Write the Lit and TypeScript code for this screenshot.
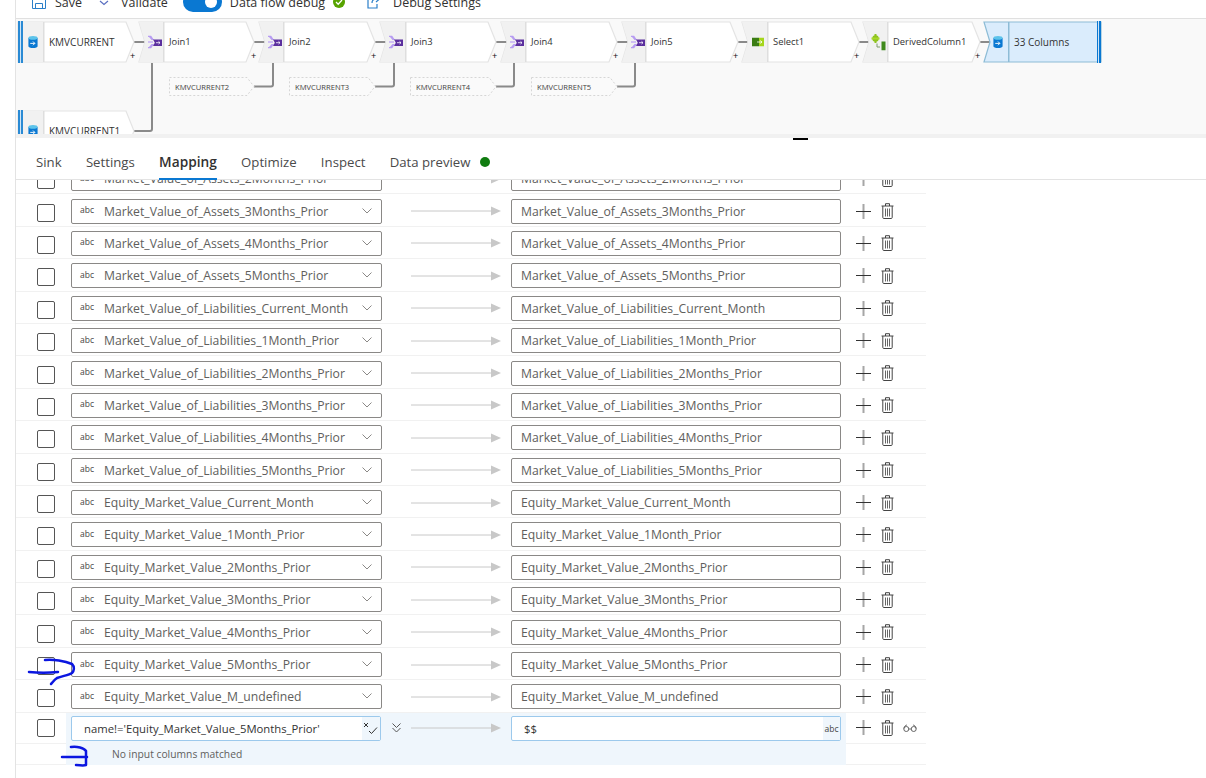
import { LitElement, html, css, svg } from "lit";
import { customElement } from "lit/decorators.js";

type Kind = "source" | "join" | "select" | "derived" | "sink";
interface FlowNode { label: string; kind: Kind; left: number; body: number; tip: number; top: number; plus?: number; }

const NODES: FlowNode[] = [
  { label: "KMVCURRENT", kind: "source", left: 18, body: 44, tip: 134, top: 22, plus: 133 },
  { label: "Join1", kind: "join", left: 139, body: 164, tip: 254, top: 22, plus: 254 },
  { label: "Join2", kind: "join", left: 259, body: 284, tip: 375, top: 22, plus: 374 },
  { label: "Join3", kind: "join", left: 380, body: 406, tip: 496, top: 22, plus: 495 },
  { label: "Join4", kind: "join", left: 501, body: 526, tip: 617, top: 22, plus: 616 },
  { label: "Join5", kind: "join", left: 622, body: 646, tip: 738, top: 22, plus: 736 },
  { label: "Select1", kind: "select", left: 742, body: 768, tip: 859, top: 22, plus: 857 },
  { label: "DerivedColumn1", kind: "derived", left: 863, body: 888, tip: 980, top: 22, plus: 978 },
  { label: "33 Columns", kind: "sink", left: 984, body: 1009, tip: 1101, top: 22 },
  { label: "KMVCURRENT1", kind: "source", left: 18, body: 44, tip: 134, top: 111 },
];

const REFS = [
  { label: "KMVCURRENT2", left: 169, tip: 254, riser: 273 },
  { label: "KMVCURRENT3", left: 289, tip: 375, riser: 394 },
  { label: "KMVCURRENT4", left: 410, tip: 496, riser: 514 },
  { label: "KMVCURRENT5", left: 531, tip: 617, riser: 635 },
];

const LINKS = [
  [134, 146], [254, 266], [375, 386], [496, 507], [617, 628], [738, 749], [859, 870], [980, 991],
];

const COLUMNS = [
  "Market_Value_of_Assets_2Months_Prior",
  "Market_Value_of_Assets_3Months_Prior",
  "Market_Value_of_Assets_4Months_Prior",
  "Market_Value_of_Assets_5Months_Prior",
  "Market_Value_of_Liabilities_Current_Month",
  "Market_Value_of_Liabilities_1Month_Prior",
  "Market_Value_of_Liabilities_2Months_Prior",
  "Market_Value_of_Liabilities_3Months_Prior",
  "Market_Value_of_Liabilities_4Months_Prior",
  "Market_Value_of_Liabilities_5Months_Prior",
  "Equity_Market_Value_Current_Month",
  "Equity_Market_Value_1Month_Prior",
  "Equity_Market_Value_2Months_Prior",
  "Equity_Market_Value_3Months_Prior",
  "Equity_Market_Value_4Months_Prior",
  "Equity_Market_Value_5Months_Prior",
  "Equity_Market_Value_M_undefined",
];

const TABS = ["Sink", "Settings", "Mapping", "Optimize", "Inspect", "Data preview"];

function nodeIcon(kind: Kind) {
  if (kind === "source" || kind === "sink") {
    return svg`<svg class="nicon" width="11" height="14" viewBox="0 0 12 14">
      <path d="M1 2.500v9c0 1.200 2.200 2 5 2s5-.8 5-2v-9z" fill="#0a78d2"/>
      <ellipse cx="6" cy="2.500" rx="5" ry="2" fill="#5cc3ea"/>
      <path d="M3 8.500h5M6 6.500l2 2-2 2" fill="none" stroke="#fff" stroke-width="1"/>
    </svg>`;
  }
  if (kind === "join") {
    return svg`<svg class="nicon" width="14" height="13" viewBox="0 0 14 13">
      <path d="M0 0h3l3 4.500H3.500L1 1.500H0zM0 13h3l3-4.500H3.500L1 11.500H0z" fill="#b79cf2"/>
      <path d="M0 5.800h5v1.400H0z" fill="#c4aef5"/>
      <path d="M5 4h9v6.500H5l1.800-3.200z" fill="#5b2f9e"/>
      <path d="M8 7.200h4M10.500 5.800l1.500 1.400-1.500 1.400" fill="none" stroke="#fff" stroke-width=".8"/>
    </svg>`;
  }
  if (kind === "select") {
    return svg`<svg class="nicon" width="12" height="9" viewBox="0 0 12 9">
      <rect width="7" height="9" fill="#3b7d14"/>
      <rect x="7" width="5" height="9" fill="#a5d61d"/>
      <path d="M5 4.500h5M8.400 3l1.600 1.500L8.400 6" fill="none" stroke="#fff" stroke-width=".8"/>
    </svg>`;
  }
  return svg`<svg class="nicon" width="16" height="17" viewBox="0 0 16 17">
    <circle cx="4.500" cy="5" r="3.200" fill="#8cc21c"/>
    <rect x="3.500" y="0.500" width="2" height="9" fill="#8fc31e"/>
    <rect x="0.500" y="4" width="8" height="2" fill="#a8d82a"/>
    <path d="M6 10v3.500h3" fill="none" stroke="#7e9a6c" stroke-width="1"/>
    <rect x="10.500" y="8" width="4" height="9" fill="#3f8a1c"/>
  </svg>`;
}

function nodeShape(n: FlowNode) {
  const w = n.tip - n.left;
  const h = 40;
  const b = n.body - n.left;
  const sink = n.kind === "sink";
  const square = n.kind === "source";
  const leftEdge = square ? `0,0` : `0,0 6,20 0,40`;
  const outline = sink
    ? `0,0 ${w},0 ${w},${h} 0,${h} 6,20`
    : square
      ? `0,0 ${w - 8},0 ${w},20 ${w - 8},${h} 0,${h}`
      : `0,0 ${w - 8},0 ${w},20 ${w - 8},${h} 0,${h} 6,20`;
  const head = square
    ? `0,0 ${b},0 ${b},${h} 0,${h}`
    : `${leftEdge} ${b},${h} ${b},0`;
  return svg`<svg class="shape" width=${w + 2} height=${h + 2} viewBox="-1 -1 ${w + 2} ${h + 2}">
    <polygon points=${outline} fill=${sink ? "#daecfc" : "#fff"} stroke=${sink ? "#8dbcd6" : "#e4e4e4"} stroke-width="1.200"/>
    ${sink ? "" : svg`<polygon points=${head} fill="#f1f1f1"/>`}
    <rect x=${b - 1} y="0" width="1.500" height=${h} fill=${sink ? "#8dbcd6" : "#dedede"}/>
    ${square ? svg`<rect x="0" y="-1" width="5" height=${h + 2} fill="#2a8ad4"/><rect x="2" y="-1" width="1" height=${h + 2} fill="#cfe4f5"/>` : ""}
    ${sink ? svg`<rect x=${w - 4} y="-1" width="4" height=${h + 2} fill="#0a78d2"/><rect x=${w - 3} y="-1" width="1" height=${h + 2} fill="#cfe4f5"/>` : ""}
  </svg>`;
}

const chevron = html`<svg class="chev" width="10" height="6" viewBox="0 0 10 6"><path d="M.5.5 5 5 9.500.5" fill="none" stroke="#8a8886" stroke-width="1"/></svg>`;

const plusIcon = html`<svg class="plus" width="15" height="15" viewBox="0 0 15 15">
  <rect x="6.500" y="0" width="2" height="15" fill="#a6a6a6"/>
  <rect x="0" y="7" width="15" height="1" fill="#333"/>
</svg>`;

const trashIcon = html`<svg class="trash" width="13" height="16" viewBox="0 0 13 16">
  <path d="M.5 3h12M4.500 3V.7h4V3M1.800 3v11.500c0 .6.400 1 1 1h7.400c.6 0 1-.4 1-1V3" fill="none" stroke="#444" stroke-width="1"/>
  <path d="M4.500 5.500v8M6.500 5.500v8M8.500 5.500v8" stroke="#666" stroke-width="1"/>
</svg>`;

@customElement("app-root")
export class AppRoot extends LitElement {
  static styles = css`
    :host { display: block; width: 1206px; height: 778px; overflow: hidden; background: #fff;
      font-family: "Open Sans", "Noto Sans", "Liberation Sans", sans-serif; position: relative; }
    .shell { margin-left: 15px; height: 778px; border-left: 1px solid #e3e3e3; display: flex; flex-direction: column; overflow: hidden; }

    .toolbarclip { height: 18px; flex: none; overflow: hidden; border-bottom: 1px solid #e0e0e0; }
    .toolbar { display: flex; align-items: center; height: 24px; margin-top: -10px; padding-left: 16px; font-size: 12.5px; color: #323130; white-space: nowrap; }
    .tool { display: flex; align-items: center; gap: 9px; }
    .t-save { margin-right: 16px; }
    .t-validate { margin-right: 15px; gap: 11px; }
    .toggle { width: 39px; height: 20px; border-radius: 10px; background: #0a78d2; margin-right: 8px; position: relative; flex: none; }
    .knob { position: absolute; right: 5px; top: 4px; width: 12px; height: 12px; border-radius: 50%; background: #fff; }
    .t-debug { margin-right: 22px; gap: 8px; }
    .t-settings { gap: 12px; }

    .canvas { flex: none; height: 115px; background: #f9f9f9; position: relative; overflow: hidden; }
    .canvas-abs { position: absolute; left: -16px; top: -19px; width: 1206px; height: 134px; }
    .node { position: absolute; height: 42px; }
    .shape { position: absolute; left: -1px; top: -1px; }
    .iconslot { position: absolute; top: 0; height: 40px; width: 0; }
    .nicon { position: absolute; top: 50%; transform: translate(-50%, -50%); }
    .nlabel { position: absolute; top: 0; height: 39px; display: flex; align-items: center; font-size: 9.4px; color: #333; white-space: nowrap; }
    .nlabel.wide { font-size: 10px; }
    .nplus { position: absolute; font-size: 9px; line-height: 10px; color: #111; top: 29px; font-family: "Liberation Sans", sans-serif; }
    .ref { position: absolute; top: 77px; height: 19px; }
    .refshape { position: absolute; left: 0; top: 0; }
    .reflabel { position: absolute; left: 6px; top: 0; height: 19px; display: flex; align-items: center; font-size: 7.6px; color: #444; white-space: nowrap; }
    .wires { position: absolute; left: 0; top: 0; }

    .band { flex: none; height: 4px; background: #f1f1f1; position: relative; }
    .handle { position: absolute; left: 777px; top: 4px; width: 15px; height: 2px; background: #000; z-index: 2; }

    .tabs { flex: none; height: 42px; display: flex; align-items: center; gap: 24.3px; padding-left: 20px; border-bottom: 1px solid #e3e3e3; font-size: 13.2px; color: #4a4a4a; box-sizing: border-box; position: relative; background: #fff; }
    .tab { position: relative; height: 42px; display: flex; align-items: center; padding-top: 6px; box-sizing: border-box; white-space: nowrap; }
    .tab.on { font-weight: 600; color: #323130; font-size: 13.7px; }
    .tab.on::after { content: ""; position: absolute; left: 0; right: 0; bottom: 0; height: 2px; background: #0a78d2; }
    .dot { width: 10px; height: 10px; border-radius: 50%; background: #107c10; margin: 6px 0 0 -15px; }

    .list { flex: 1; overflow: hidden; min-height: 0; }
    .rows { margin-top: -18px; width: 910px; }
    .row { height: 32.4px; box-sizing: border-box; border-bottom: 1px solid #f1f1f1; display: flex; align-items: center; padding: 2px 0 0 21px; }
    .check { width: 18px; height: 18px; border: 1px solid #555; border-radius: 2px; box-sizing: border-box; flex: none; margin-top: 3px; background: #fff; }
    .field { height: 25px; box-sizing: border-box; border: 1px solid #8a8886; border-radius: 2px; background: #fff; display: flex; align-items: center; font-size: 12.2px; color: #605e5c; white-space: nowrap; flex: none; position: relative; }
    .select { width: 311px; margin-left: 16px; padding-left: 8px; }
    .abc { font-size: 8.5px; width: 24px; flex: none; margin-top: -3px; color: #444; }
    .chev { position: absolute; right: 9px; top: 8px; }
    .arrow { margin-left: 29px; flex: none; display: block; }
    .output { width: 330px; margin-left: 10px; padding-left: 9px; }
    .plus { margin-left: 15px; flex: none; }
    .trash { margin-left: 10px; flex: none; }

    .editrow { height: 52px; width: 910px; display: grid; grid-template-columns: 50px 780px 80px; grid-template-rows: 31px 21px; border-bottom: 1px solid #f1f1f1; box-sizing: border-box; }
    .editcheck { display: flex; align-items: center; padding-left: 21px; border-bottom: 1px solid #f1f1f1; }
    .editcheck .check { margin-top: 0; }
    .tint { background: #eff6fc; display: flex; align-items: center; padding-left: 5px; }
    .expr { width: 310px; height: 25px; border-color: #9cc9ec; padding-left: 12px; color: #333; font-size: 11.3px; background: #fff; }
    .exprtools { position: absolute; right: 0; top: 0; bottom: 0; width: 18px; background: #eff6fc; }
    .xcheck { position: absolute; right: 1px; top: 5px; }
    .dbl { margin-left: 11px; flex: none; }
    .arrow2 { margin-left: 10px; flex: none; display: block; }
    .output2 { width: 330px; margin-left: 10px; padding-left: 12px; border-color: #9cc9ec; color: #333; font-size: 11.3px; }
    .abc2 { position: absolute; right: 0; top: 0; bottom: 0; width: 17px; background: #eff6fc; display: flex; align-items: center; justify-content: center; font-size: 8.5px; color: #444; }
    .editactions { display: flex; align-items: center; border-bottom: 1px solid #f1f1f1; }
    .editactions .plus { margin-left: 10px; }
    .glasses { margin-left: 9px; flex: none; }
    .nomatch { grid-column: 2; font-size: 10.3px; color: #605e5c; padding-left: 46px; }
    .sub-left { grid-column: 1; }

    .scribble { position: absolute; left: 0; top: 0; pointer-events: none; }
  `;

  private renderToolbar() {
    return html`<div class="toolbarclip"><div class="toolbar">
      <div class="tool t-save">
        <svg width="14" height="14" viewBox="0 0 14 14"><path d="M.5.5h10.500l2.500 2.500v10.500H.5z" fill="none" stroke="#2a7fc9"/><path d="M3.500 13.500V8.500h7v5" fill="none" stroke="#2a7fc9"/></svg>
        <span>Save</span>
      </div>
      <div class="tool t-validate">
        <svg width="12" height="12" viewBox="0 0 12 12"><path d="M2 5l4 3.500L10 5" fill="none" stroke="#5a6fc0" stroke-width="1.200"/></svg>
        <span>Validate</span>
      </div>
      <div class="toggle"><div class="knob"></div></div>
      <div class="tool t-debug">
        <span>Data flow debug</span>
        <svg width="12" height="12" viewBox="0 0 12 12"><circle cx="6" cy="6" r="6" fill="#57a300"/><path d="M3 6l2.200 2.200L9 4" fill="none" stroke="#fff" stroke-width="1.300"/></svg>
      </div>
      <div class="tool t-settings">
        <svg width="14" height="14" viewBox="0 0 14 14"><path d="M6 3H1v10h9V9" fill="none" stroke="#2a7fc9" stroke-width="1.200"/><path d="M5 8c0-3 2-4 5-4M9 1l3.500 3L9 7" fill="none" stroke="#2a7fc9" stroke-width="1.200"/></svg>
        <span>Debug Settings</span>
      </div>
    </div></div>`;
  }

  private renderNode(n: FlowNode) {
    const iconCx = n.kind === "source" ? 33 : (n.kind === "sink" ? n.left + 14 : n.left + 16);
    const wide = n.kind === "source" || n.kind === "sink";
    return html`<div class="node" style="left:${n.left}px;top:${n.top}px;width:${n.tip - n.left}px">
      ${nodeShape(n)}
      <div class="iconslot" style="left:${iconCx - n.left}px">${nodeIcon(n.kind)}</div>
      <div class="nlabel ${wide ? "wide" : ""}" style="left:${n.body - n.left + 5}px">${n.label}</div>
      ${n.plus ? html`<div class="nplus" style="left:${n.plus - n.left - 3}px">+</div>` : ""}
    </div>`;
  }

  private renderCanvas() {
    return html`<div class="canvas"><div class="canvas-abs">
      <svg class="wires" width="1206" height="134" viewBox="0 0 1206 134">
        ${LINKS.map(([a, b]) => svg`<line x1=${a} x2=${b} y1="42" y2="42" stroke="#8a8a8a" stroke-width="2"/>`)}
        <path d="M134 131H150q2 0 2-2V63" fill="none" stroke="#8a8a8a" stroke-width="2"/>
        ${REFS.map((r) => svg`<path d="M${r.tip} 86.500H${r.riser - 2}q2 0 2-2V63" fill="none" stroke="#8a8a8a" stroke-width="2"/>`)}
      </svg>
      ${NODES.map((n) => this.renderNode(n))}
      ${REFS.map((r) => {
        const w = r.tip - r.left;
        return html`<div class="ref" style="left:${r.left}px;width:${w}px">
          <svg class="refshape" width=${w + 1} height="20" viewBox="0 0 ${w + 1} 20">
            <polygon points="0.500,0.500 ${w - 7},0.500 ${w},9.500 ${w - 7},18.500 0.500,18.500" fill="#fafafa" stroke="#d6d6d6" stroke-dasharray="2 2"/>
          </svg>
          <div class="reflabel">${r.label}</div>
        </div>`;
      })}
    </div></div>`;
  }

  private renderRow(name: string) {
    return html`<div class="row">
      <div class="check"></div>
      <div class="field select"><span class="abc">abc</span><span>${name}</span>${chevron}</div>
      <svg class="arrow" width="90" height="10" viewBox="0 0 90 10"><line x1="0" x2="80" y1="5" y2="5" stroke="#c8c8c8"/><polygon points="80,0.500 90,5 80,9.500" fill="#c8c8c8"/></svg>
      <div class="field output">${name}</div>
      ${plusIcon}
      ${trashIcon}
    </div>`;
  }

  private renderEdit() {
    return html`<div class="editrow">
      <div class="editcheck"><div class="check"></div></div>
      <div class="tint">
        <div class="field expr">
          name!='Equity_Market_Value_5Months_Prior'
          <div class="exprtools">
            <svg class="xcheck" width="16" height="14" viewBox="0 0 16 14">
              <path d="M1 1l4 4M5 1L1 5" stroke="#333" stroke-width="1"/>
              <path d="M6 9l2.500 2.500L14 5.500" fill="none" stroke="#333" stroke-width="1"/>
            </svg>
          </div>
        </div>
        <svg class="dbl" width="9" height="10" viewBox="0 0 9 10"><path d="M.5.5l4 4 4-4M.5 5l4 4 4-4" fill="none" stroke="#555" stroke-width="1"/></svg>
        <svg class="arrow2" width="90" height="10" viewBox="0 0 90 10"><line x1="0" x2="80" y1="5" y2="5" stroke="#c8c8c8"/><polygon points="80,0.500 90,5 80,9.500" fill="#c8c8c8"/></svg>
        <div class="field output2">$$<div class="abc2">abc</div></div>
      </div>
      <div class="editactions">
        ${plusIcon}
        ${trashIcon}
        <svg class="glasses" width="14" height="8" viewBox="0 0 14 8"><circle cx="3.300" cy="5" r="2.500" fill="none" stroke="#555" stroke-width=".9"/><circle cx="10.700" cy="5" r="2.500" fill="none" stroke="#555" stroke-width=".9"/><path d="M.8 4.500C1.300 2.500 2.500 1 4 1M13.200 4.500C12.700 2.500 11.500 1 10 1M5.800 5h2.400" fill="none" stroke="#555" stroke-width=".8"/></svg>
      </div>
      <div class="sub-left"></div>
      <div class="tint nomatch">No input columns matched</div>
      <div></div>
    </div>`;
  }

  render() {
    return html`<div class="shell">
      ${this.renderToolbar()}
      ${this.renderCanvas()}
      <div class="band"><div class="handle"></div></div>
      <div class="tabs">
        ${TABS.map((t) => html`<div class="tab ${t === "Mapping" ? "on" : ""}">${t}</div>`)}
        <div class="dot"></div>
      </div>
      <div class="list"><div class="rows">
        ${COLUMNS.map((c) => this.renderRow(c))}
        ${this.renderEdit()}
      </div></div>
    </div>
    <svg class="scribble" width="1206" height="778" viewBox="0 0 1206 778" fill="none" stroke="#0b16e0" stroke-width="2.500" stroke-linecap="round" stroke-linejoin="round">
      <path d="M45 660c8-1 20 1 27 4 3 3 2 7 0 9-3 2-10 3-15 5-3 2-4 4-6 6"/>
      <path d="M29 672c9 1 20 1 29 0"/>
      <path d="M71 747c6-1 13 1 15 4v14c-3 1-6 0-10 0"/>
      <path d="M62 757h25"/>
    </svg>`;
  }
}
